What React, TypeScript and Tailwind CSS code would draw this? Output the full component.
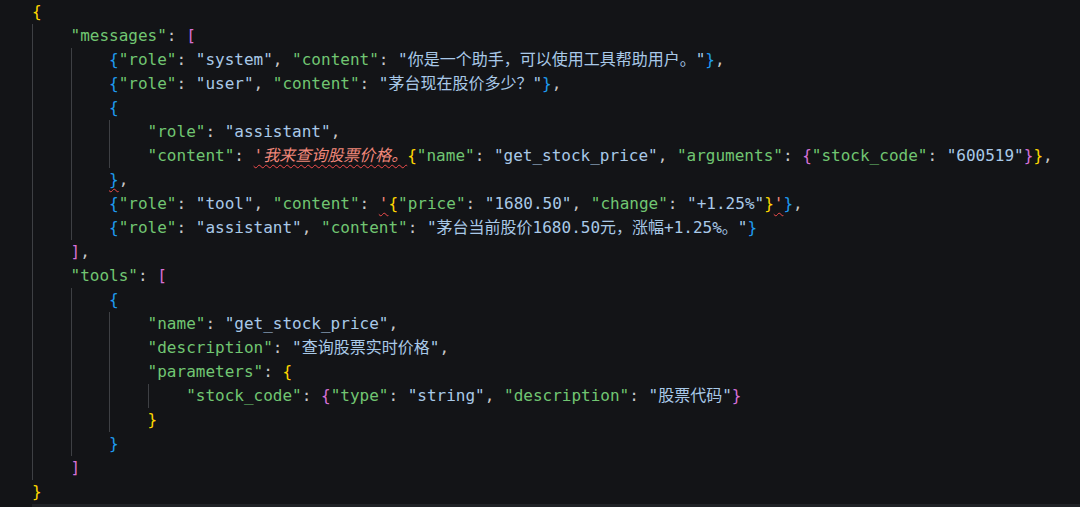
import React from "react";

type Tok = [string, string];

const K = "text-[#71c672]";
const S = "text-[#a9c9e8]";
const P = "text-[#c8c8c8]";
const Y = "text-[#ffd700]";
const M = "text-[#d670d6]";
const B = "text-[#1f9bf0]";
const E = "text-[#f0877a]";
const ERR = "underline decoration-wavy decoration-[#f14c4c] decoration-1 underline-offset-[3px]";

const lines: { indent: number; toks: Tok[] }[] = [
  { indent: 0, toks: [["{", Y]] },
  { indent: 1, toks: [['"messages"', K], [": ", P], ["[", M]] },
  {
    indent: 2,
    toks: [
      ["{", B], ['"role"', K], [": ", P], ['"system"', S], [", ", P],
      ['"content"', K], [": ", P], ['"你是一个助手，可以使用工具帮助用户。"', S],
      ["}", B], [",", P],
    ],
  },
  {
    indent: 2,
    toks: [
      ["{", B], ['"role"', K], [": ", P], ['"user"', S], [", ", P],
      ['"content"', K], [": ", P], ['"茅台现在股价多少？"', S], ["}", B], [",", P],
    ],
  },
  { indent: 2, toks: [["{", B]] },
  { indent: 3, toks: [['"role"', K], [": ", P], ['"assistant"', S], [",", P]] },
  {
    indent: 3,
    toks: [
      ['"content"', K], [": ", P], ["'我来查询股票价格。", `${E} italic ${ERR}`],
      ["{", Y], ['"name"', K], [": ", P], ['"get_stock_price"', S], [", ", P],
      ['"arguments"', K], [": ", P], ["{", M], ['"stock_code"', K], [": ", P],
      ['"600519"', S], ["}", M], ["}", Y], [",", P],
    ],
  },
  { indent: 2, toks: [["}", `${B} ${ERR}`], [",", P]] },
  {
    indent: 2,
    toks: [
      ["{", B], ['"role"', K], [": ", P], ['"tool"', S], [", ", P],
      ['"content"', K], [": ", P], ["'", `${E} ${ERR}`], ["{", Y], ['"price"', K],
      [": ", P], ['"1680.50"', S], [", ", P], ['"change"', K], [": ", P],
      ['"+1.25%"', S], ["}", Y], ["'", `${E} ${ERR}`], ["}", B], [",", P],
    ],
  },
  {
    indent: 2,
    toks: [
      ["{", B], ['"role"', K], [": ", P], ['"assistant"', S], [", ", P],
      ['"content"', K], [": ", P], ['"茅台当前股价1680.50元，涨幅+1.25%。"', S],
      ["}", B],
    ],
  },
  { indent: 1, toks: [["]", M], [",", P]] },
  { indent: 1, toks: [['"tools"', K], [": ", P], ["[", M]] },
  { indent: 2, toks: [["{", B]] },
  { indent: 3, toks: [['"name"', K], [": ", P], ['"get_stock_price"', S], [",", P]] },
  { indent: 3, toks: [['"description"', K], [": ", P], ['"查询股票实时价格"', S], [",", P]] },
  { indent: 3, toks: [['"parameters"', K], [": ", P], ["{", Y]] },
  {
    indent: 4,
    toks: [
      ['"stock_code"', K], [": ", P], ["{", M], ['"type"', K], [": ", P],
      ['"string"', S], [", ", P], ['"description"', K], [": ", P],
      ['"股票代码"', S], ["}", M],
    ],
  },
  { indent: 3, toks: [["}", Y]] },
  { indent: 2, toks: [["}", B]] },
  { indent: 1, toks: [["]", M]] },
  { indent: 0, toks: [["}", Y]] },
];

const CodeLine = ({ indent, toks }: { indent: number; toks: Tok[] }) => (
  <div className="flex h-6 items-center whitespace-pre pl-8">
    {Array.from({ length: indent }).map((_, i) => (
      <span key={i} className="h-6 w-[4ch] shrink-0 border-l border-[#3e4044]" />
    ))}
    {toks.map(([text, cls], i) => (
      <span key={i} className={cls}>
        {text}
      </span>
    ))}
  </div>
);

export default function App() {
  return (
    <div
      className="flex h-[507px] w-full flex-col overflow-hidden bg-[#131417] text-[16px] leading-6"
      style={{ fontFamily: '"DejaVu Sans Mono", "Noto Sans CJK SC", monospace' }}
    >
      {lines.map((l, i) => (
        <CodeLine key={i} indent={l.indent} toks={l.toks} />
      ))}
      <div className="ml-8 h-[3px] bg-[#202226]" />
    </div>
  );
}
